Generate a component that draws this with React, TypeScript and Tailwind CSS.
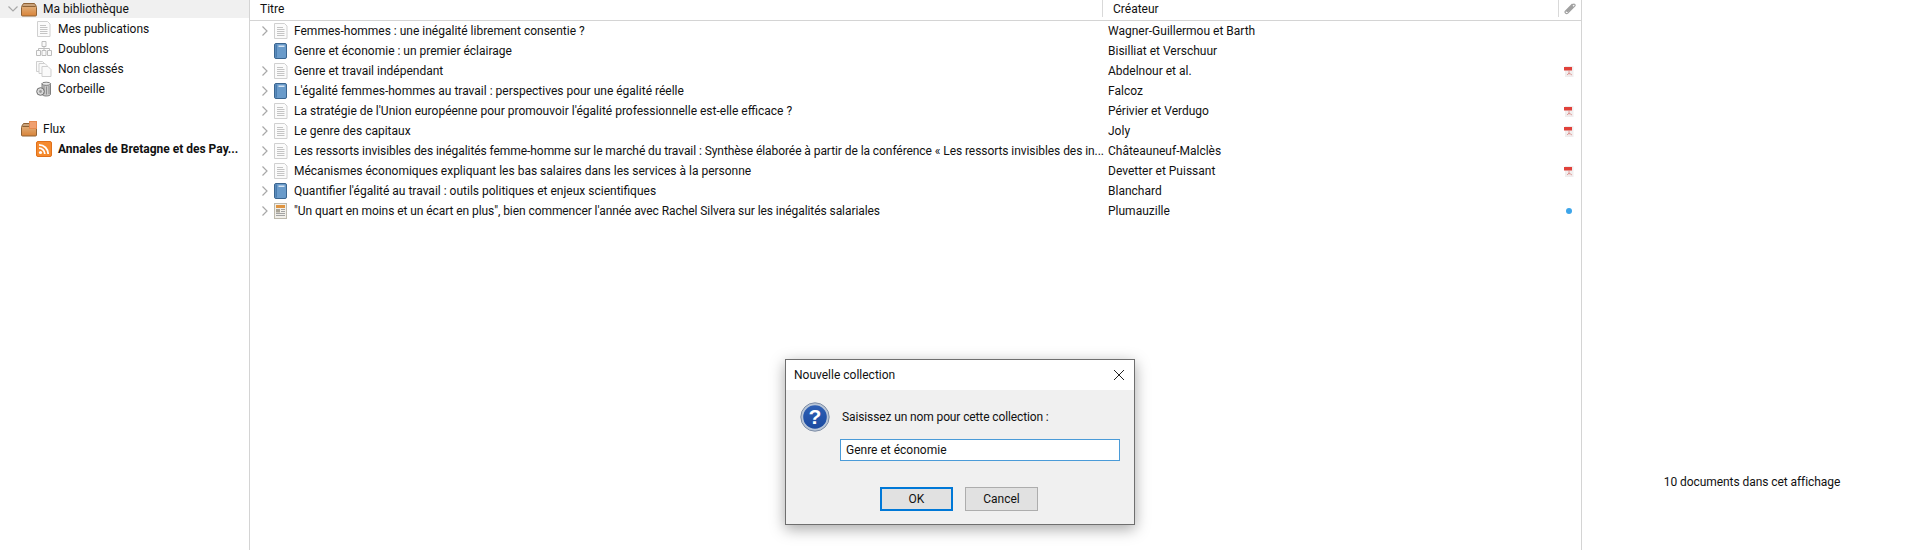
import type { ReactNode } from 'react';

const font = "font-['Roboto','Noto_Sans','Liberation_Sans',sans-serif]";

type Kind = 'doc' | 'book' | 'news';

const rows: { title: string; creator: string; kind: Kind; chevron: boolean; attach?: 'pdf' | 'dot'; tight?: boolean }[] = [
  { title: 'Femmes-hommes : une inégalité librement consentie ?', creator: 'Wagner-Guillermou et Barth', kind: 'doc', chevron: true },
  { title: 'Genre et économie : un premier éclairage', creator: 'Bisilliat et Verschuur', kind: 'book', chevron: false },
  { title: 'Genre et travail indépendant', creator: 'Abdelnour et al.', kind: 'doc', chevron: true, attach: 'pdf' },
  { title: "L'égalité femmes-hommes au travail : perspectives pour une égalité réelle", creator: 'Falcoz', kind: 'book', chevron: true },
  { title: "La stratégie de l'Union européenne pour promouvoir l'égalité professionnelle est-elle efficace ?", creator: 'Périvier et Verdugo', kind: 'doc', chevron: true, attach: 'pdf' },
  { title: 'Le genre des capitaux', creator: 'Joly', kind: 'doc', chevron: true, attach: 'pdf' },
  { title: 'Les ressorts invisibles des inégalités femme-homme sur le marché du travail : Synthèse élaborée à partir de la conférence « Les ressorts invisibles des in...', creator: 'Châteauneuf-Malclès', kind: 'doc', chevron: true, tight: true },
  { title: 'Mécanismes économiques expliquant les bas salaires dans les services à la personne', creator: 'Devetter et Puissant', kind: 'doc', chevron: true, attach: 'pdf' },
  { title: "Quantifier l'égalité au travail : outils politiques et enjeux scientifiques", creator: 'Blanchard', kind: 'book', chevron: true },
  { title: '"Un quart en moins et un écart en plus", bien commencer l\'année avec Rachel Silvera sur les inégalités salariales', creator: 'Plumauzille', kind: 'news', chevron: true, attach: 'dot', tight: true },
];

function Chevron({ open }: { open?: boolean }) {
  return (
    <svg width="10" height="10" viewBox="0 0 10 10" fill="none" stroke="#a8a8a8" strokeWidth="1.2">
      {open ? <path d="M.5 2.5l4.5 4.5 4.5-4.5" /> : <path d="M2.5 .5l4.5 4.5-4.5 4.5" />}
    </svg>
  );
}

function DocIcon() {
  return (
    <svg width="16" height="16" viewBox="0 0 16 16">
      <path d="M1.5 .5h10l2.5 2.5v12.5h-12.5z" fill="#fbfbfb" stroke="#d0d0d0" />
      <path d="M4 4.5h6M4 6.5h7.5M4 8.5h7.5M4 10.5h7.5M4 12.5h7.5" stroke="#c4c4c4" />
    </svg>
  );
}

function BookIcon() {
  return (
    <svg width="16" height="16" viewBox="0 0 16 16">
      <rect x="1.5" y=".5" width="12" height="15" rx="1.5" fill="#6a9bca" stroke="#3b658f" />
      <rect x="2.5" y="1.5" width="1.5" height="13" fill="#4a7cae" />
      <rect x="5.5" y="2.5" width="6" height="1.5" fill="#d5e4f2" />
    </svg>
  );
}

function NewsIcon() {
  return (
    <svg width="16" height="16" viewBox="0 0 16 16">
      <rect x="1.5" y=".5" width="12" height="15" fill="#f1efe9" stroke="#bdb9ad" />
      <rect x="3" y="2" width="9" height="3" fill="#df9440" />
      <rect x="3" y="6" width="4" height="3.5" fill="#a9a497" />
      <path d="M8 6.5h4M8 8.5h4M3 10.5h9M3 12.5h9" stroke="#a2a2a2" />
    </svg>
  );
}

function PdfIcon() {
  return (
    <svg width="10" height="11" viewBox="0 0 10 11">
      <rect x="1" y="0" width="8.5" height="11" fill="#f1eeee" />
      <rect x="0" y="1" width="8" height="3.5" fill="#e0413a" />
      <path d="M5 4.5v4M3 9l2-2 3 2" stroke="#d98a86" fill="none" strokeWidth=".8" />
    </svg>
  );
}

function FolderIcon({ rss }: { rss?: boolean }) {
  return (
    <svg width="16" height="16" viewBox="0 0 16 16">
      <defs>
        <linearGradient id={rss ? 'boxb' : 'boxa'} x1="0" y1="0" x2="0" y2="1">
          <stop offset="0" stopColor="#e0ad78" />
          <stop offset="1" stopColor="#d98338" />
        </linearGradient>
      </defs>
      <path d="M.5 5.5l2-3h11l2 3" fill="#c9a27a" stroke="#8f6235" />
      <rect x=".5" y="5.5" width="15" height="9.5" rx="1" fill={`url(#${rss ? 'boxb' : 'boxa'})`} stroke="#8f6235" />
      {rss && <rect x="8.5" y=".5" width="7" height="7" fill="#f0a070" stroke="#e58a50" />}
    </svg>
  );
}

function RssIcon() {
  return (
    <svg width="16" height="16" viewBox="0 0 16 16">
      <rect x=".5" y=".5" width="15" height="15" rx="1.5" fill="#f58a2e" stroke="#e0701a" />
      <circle cx="4.5" cy="11.5" r="1.6" fill="#fff" />
      <path d="M3 7.2a5.8 5.8 0 0 1 5.8 5.8M3 3.8a9.2 9.2 0 0 1 9.2 9.2" stroke="#fff" strokeWidth="1.8" fill="none" />
    </svg>
  );
}

function DuplicatesIcon() {
  return (
    <svg width="16" height="16" viewBox="0 0 16 16" fill="#fafafa" stroke="#bdbdbd">
      <path d="M6 .5h4v5H6zM.5 9.5h4v5h-4zM6 9.5h4v5H6zM11.5 9.5h4v5h-4z" />
      <path d="M8 5.5v4M2.5 9.5v-2h11v2" fill="none" />
    </svg>
  );
}

function UnfiledIcon() {
  return (
    <svg width="16" height="16" viewBox="0 0 16 16" fill="#fafafa" stroke="#cfcfcf">
      <path d="M.5 .5h6l2 2v8h-8z" />
      <path d="M3 2.5h6l2 2v8H3z" />
      <path d="M6 5.5h6l3 3v7H6z" />
    </svg>
  );
}

function TrashIcon() {
  return (
    <svg width="16" height="16" viewBox="0 0 16 16">
      <path d="M6 2.5h8.5v11c-1 2-7.5 2-8.5 0z" fill="#c9c9c9" stroke="#7f7f7f" />
      <ellipse cx="10.2" cy="2.8" rx="4.3" ry="1.6" fill="#e8e8e8" stroke="#7f7f7f" />
      <path d="M8 5v8M10.5 5.5v8M13 5v8" stroke="#8f8f8f" />
      <circle cx="4.5" cy="10.5" r="3.8" fill="#d9d9d9" stroke="#6f6f6f" />
      <circle cx="4.5" cy="10.5" r="1.4" fill="#9a9a9a" />
    </svg>
  );
}

function QuestionIcon() {
  return (
    <svg width="30" height="30" viewBox="0 0 30 30">
      <defs>
        <linearGradient id="q" x1="0" y1="0" x2="0" y2="1">
          <stop offset="0" stopColor="#2e5fb4" />
          <stop offset="1" stopColor="#1b4aa0" />
        </linearGradient>
      </defs>
      <circle cx="15" cy="15" r="14.2" fill="#b9c6d8" stroke="#7f8ea5" />
      <circle cx="15" cy="15" r="11.8" fill="url(#q)" />
      <text x="15" y="22" textAnchor="middle" fontSize="21" fontWeight="700" fill="#fff" fontFamily="Liberation Sans, sans-serif">?</text>
    </svg>
  );
}

function SideRow({ icon, label, indent, bold, selected, chevron }: { icon: ReactNode; label: string; indent: boolean; bold?: boolean; selected?: boolean; chevron?: boolean }) {
  return (
    <div className={`flex items-center ${indent ? 'pl-[36px]' : 'pl-[8px]'} ${selected ? 'mb-px h-[18px] bg-[#f0f0f0]' : 'h-5'}`}>
      {!indent && <span className="flex w-[13px] shrink-0 items-center">{chevron && <Chevron open />}</span>}
      <span className="mr-[6px] flex shrink-0 items-center">{icon}</span>
      <span className={`whitespace-nowrap ${bold ? 'font-bold' : ''}`}>{label}</span>
    </div>
  );
}

export default function App() {
  return (
    <div className={`relative flex h-[550px] w-[1920px] overflow-hidden bg-white text-[12px] text-[#111] ${font}`}>
      <aside className="w-[250px] shrink-0 border-r border-[#d4d4d4]">
        <SideRow icon={<FolderIcon />} label="Ma bibliothèque" indent={false} selected chevron />
        <SideRow icon={<DocIcon />} label="Mes publications" indent />
        <SideRow icon={<DuplicatesIcon />} label="Doublons" indent />
        <SideRow icon={<UnfiledIcon />} label="Non classés" indent />
        <SideRow icon={<TrashIcon />} label="Corbeille" indent />
        <div className="h-5" />
        <SideRow icon={<FolderIcon rss />} label="Flux" indent={false} />
        <SideRow icon={<RssIcon />} label="Annales de Bretagne et des Pay..." indent bold />
      </aside>

      <main className="flex w-[1332px] shrink-0 flex-col border-r border-[#d4d4d4]">
        <div className="flex h-[21px] shrink-0 items-start border-b border-[#d4d4d4]">
          <div className="flex h-[18px] w-[852px] shrink-0 items-center pl-[10px]">Titre</div>
          <div className="flex h-[17px] flex-1 items-center border-l border-[#d9d9d9] pl-[10px]">Créateur</div>
          <div className="flex h-[17px] w-[23px] items-center justify-center border-l border-[#d9d9d9]">
            <svg width="12" height="12" viewBox="0 0 12 12" fill="none" stroke="#a0a0a0" strokeWidth="1.2">
              <path d="M8.5 1L1.6 7.9c-1.5 1.6.6 3.7 2.2 2.2l6.9-6.9c1.1-1.2-.5-2.9-1.7-1.7L3 7.5c-.6.7.2 1.4.8.8L9 3.2" />
            </svg>
          </div>
        </div>
        {rows.map((row) => (
          <div key={row.title} className="flex h-5 shrink-0 items-center">
            <div className="flex w-[852px] shrink-0 items-center pl-[10px]">
              <span className="mr-[3px] flex w-[10px] justify-center">{row.chevron && <Chevron />}</span>
              <span className="mr-[5px] flex">
                {row.kind === 'doc' ? <DocIcon /> : row.kind === 'book' ? <BookIcon /> : <NewsIcon />}
              </span>
              <span className={`whitespace-nowrap ${row.tight ? 'tracking-[-0.07px]' : ''}`}>{row.title}</span>
            </div>
            <div className="flex-1 pl-[6px]">{row.creator}</div>
            <div className="flex w-[23px] justify-center pr-[1px]">
              {row.attach === 'pdf' && <PdfIcon />}
              {row.attach === 'dot' && <span className="h-[6px] w-[6px] rounded-full bg-[#3da5ea]" />}
            </div>
          </div>
        ))}
      </main>

      <div className="flex flex-1 justify-center pl-[2px] pt-[473px] tracking-[-0.07px]">10 documents dans cet affichage</div>

      <div className="absolute left-[785px] top-[359px] flex h-[166px] w-[350px] flex-col border border-[#6f6f6f] bg-[#f0f0f0] shadow-[0_4px_14px_rgba(0,0,0,0.35)]">
        <div className="flex h-[30px] shrink-0 items-center justify-between bg-white pl-[8px] pr-[9px]">
          <span>Nouvelle collection</span>
          <svg width="12" height="12" viewBox="0 0 12 12" stroke="#222" fill="none">
            <path d="M1 1l10 10M11 1L1 11" />
          </svg>
        </div>
        <div className="flex flex-1 flex-col pl-[14px]">
          <div className="mt-[12px] flex items-center">
            <QuestionIcon />
            <span className="ml-[12px] tracking-[-0.12px]">Saisissez un nom pour cette collection :</span>
          </div>
          <div className="ml-[40px] mt-[7px] flex h-[22px] w-[280px] items-center border border-[#4a9bd8] bg-white pl-[5px]">
            Genre et économie
          </div>
          <div className="ml-[80px] mt-[26px] flex gap-[12px]">
            <button className="h-[24px] w-[73px] border-2 border-[#0078d7] bg-[#e1e1e1]">OK</button>
            <button className="h-[24px] w-[73px] border border-[#adadad] bg-[#e1e1e1]">Cancel</button>
          </div>
        </div>
      </div>
    </div>
  );
}
